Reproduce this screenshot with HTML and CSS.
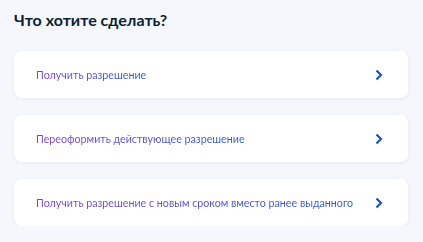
FILE: index.html
```html
<!DOCTYPE html>
<html lang="ru">
<head>
<meta charset="utf-8">
<link rel="stylesheet" href="styles.css">
</head>
<body>
<main class="page">
  <h2 class="title">Что хотите сделать?</h2>
  <div class="list">
    <a class="card" href="#"><span class="label">Получить разрешение</span><svg class="chev" viewBox="0 0 8 12" width="8" height="12"><path d="M1.5 1.5 6 6l-4.5 4.5" fill="none" stroke="#0d4cd3" stroke-width="2"/></svg></a>
    <a class="card" href="#"><span class="label">Переоформить действующее разрешение</span><svg class="chev" viewBox="0 0 8 12" width="8" height="12"><path d="M1.5 1.5 6 6l-4.5 4.5" fill="none" stroke="#0d4cd3" stroke-width="2"/></svg></a>
    <a class="card" href="#"><span class="label">Получить разрешение с новым сроком вместо ранее выданного</span><svg class="chev" viewBox="0 0 8 12" width="8" height="12"><path d="M1.5 1.5 6 6l-4.5 4.5" fill="none" stroke="#0d4cd3" stroke-width="2"/></svg></a>
  </div>
</main>
</body>
</html>
```
FILE: styles.css
```css
html, body {
  margin: 0;
  background: #f5f7fc;
}
.page {
  padding: 8px 15px 0 14px;
  font-family: Lato, "Noto Sans", sans-serif;
}
.title {
  margin: 0 0 19px;
  font-size: 16px;
  line-height: 24px;
  font-weight: 700;
  color: #0b1f33;
}
.list {
  display: flex;
  flex-direction: column;
  gap: 17px;
}
.card {
  display: flex;
  align-items: center;
  justify-content: space-between;
  height: 47px;
  padding: 0 25px 0 22px;
  background: #fff;
  border-radius: 8px;
  box-shadow: 0 1px 4px rgba(30, 60, 140, 0.08);
  text-decoration: none;
}
.label {
  font-size: 10.7px;
  line-height: 16px;
  white-space: nowrap;
  background: linear-gradient(90deg, #7a46e4, #2d5ad9);
  -webkit-background-clip: text;
  background-clip: text;
  color: transparent;
}
.chev {
  display: block;
  flex: none;
}
```
